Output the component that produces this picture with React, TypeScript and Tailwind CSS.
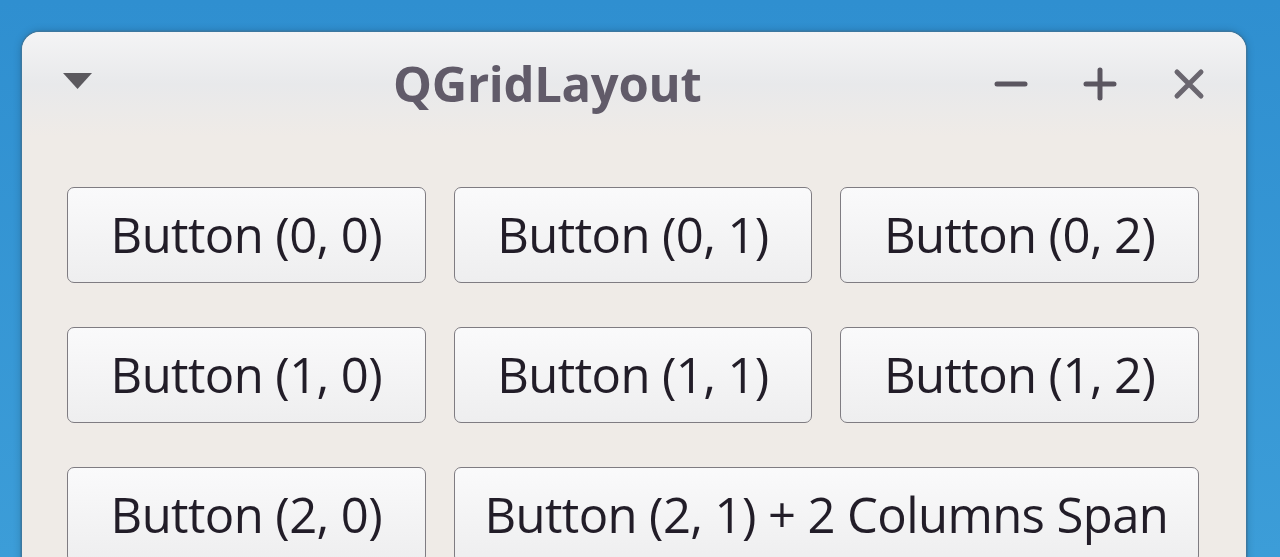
import React from 'react';

const buttons = [
  { label: 'Button (0, 0)' },
  { label: 'Button (0, 1)' },
  { label: 'Button (0, 2)' },
  { label: 'Button (1, 0)' },
  { label: 'Button (1, 1)' },
  { label: 'Button (1, 2)' },
  { label: 'Button (2, 0)' },
  { label: 'Button (2, 1) + 2 Columns Span', span: true },
];

function GridButton({ label, span }: { label: string; span?: boolean }) {
  return (
    <button
      className={`h-[96px] rounded-[7px] border-[1.5px] border-[#7f7c82] bg-gradient-to-b from-[#fafafb] to-[#eeeeef] text-[49px] text-[#221d28] tracking-[-0.6px] flex items-center justify-center ${span ? 'col-span-2' : ''}`}
      style={{ fontFamily: '"Open Sans", sans-serif' }}
    >
      {label}
    </button>
  );
}

export default function App() {
  return (
    <div className="w-full h-[557px] overflow-hidden bg-gradient-to-b from-[#2f8fd0] to-[#3c9dd8] pt-[32px]">
      <div className="ml-[22px] w-[1224px] h-[600px] rounded-t-[18px] bg-[#efebe7] shadow-[0_0_0_1.5px_#3c78a0,0_0_8px_rgba(0,0,0,0.25)] overflow-hidden">
        {/* title bar */}
        <div className="h-[104px] flex items-center bg-gradient-to-b from-[#f4f4f5] via-[#e8e9eb] to-[#efebe7] pl-[40px] pr-[40px]">
          <svg width="31" height="18" viewBox="0 0 31 18" className="mt-[-6px]">
            <path d="M1 1 L30 1 L15.5 17 Z" fill="#5b595e" />
          </svg>
          <div
            className="ml-[300px] text-[49px] font-bold text-[#615b69] tracking-[-0.3px]"
            style={{ fontFamily: '"Open Sans", sans-serif' }}
          >
            QGridLayout
          </div>
          <div className="ml-auto flex items-center">
            <svg width="34" height="34" viewBox="0 0 34 34">
              <path d="M3 17 H31" stroke="#5b5660" strokeWidth="5" strokeLinecap="round" />
            </svg>
            <svg width="34" height="34" viewBox="0 0 34 34" className="ml-[55px]">
              <path d="M3 17 H31 M17 3 V31" stroke="#5b5660" strokeWidth="5" strokeLinecap="round" />
            </svg>
            <svg width="34" height="34" viewBox="0 0 34 34" className="ml-[55px]">
              <path d="M5 5 L29 29 M29 5 L5 29" stroke="#6a666f" strokeWidth="5" strokeLinecap="round" />
            </svg>
          </div>
        </div>
        {/* grid */}
        <div className="pt-[51px] pl-[45px] pr-[47px] grid grid-cols-3 gap-x-[28px] gap-y-[44px]">
          {buttons.map((b) => (
            <GridButton key={b.label} label={b.label} span={b.span} />
          ))}
        </div>
      </div>
    </div>
  );
}
